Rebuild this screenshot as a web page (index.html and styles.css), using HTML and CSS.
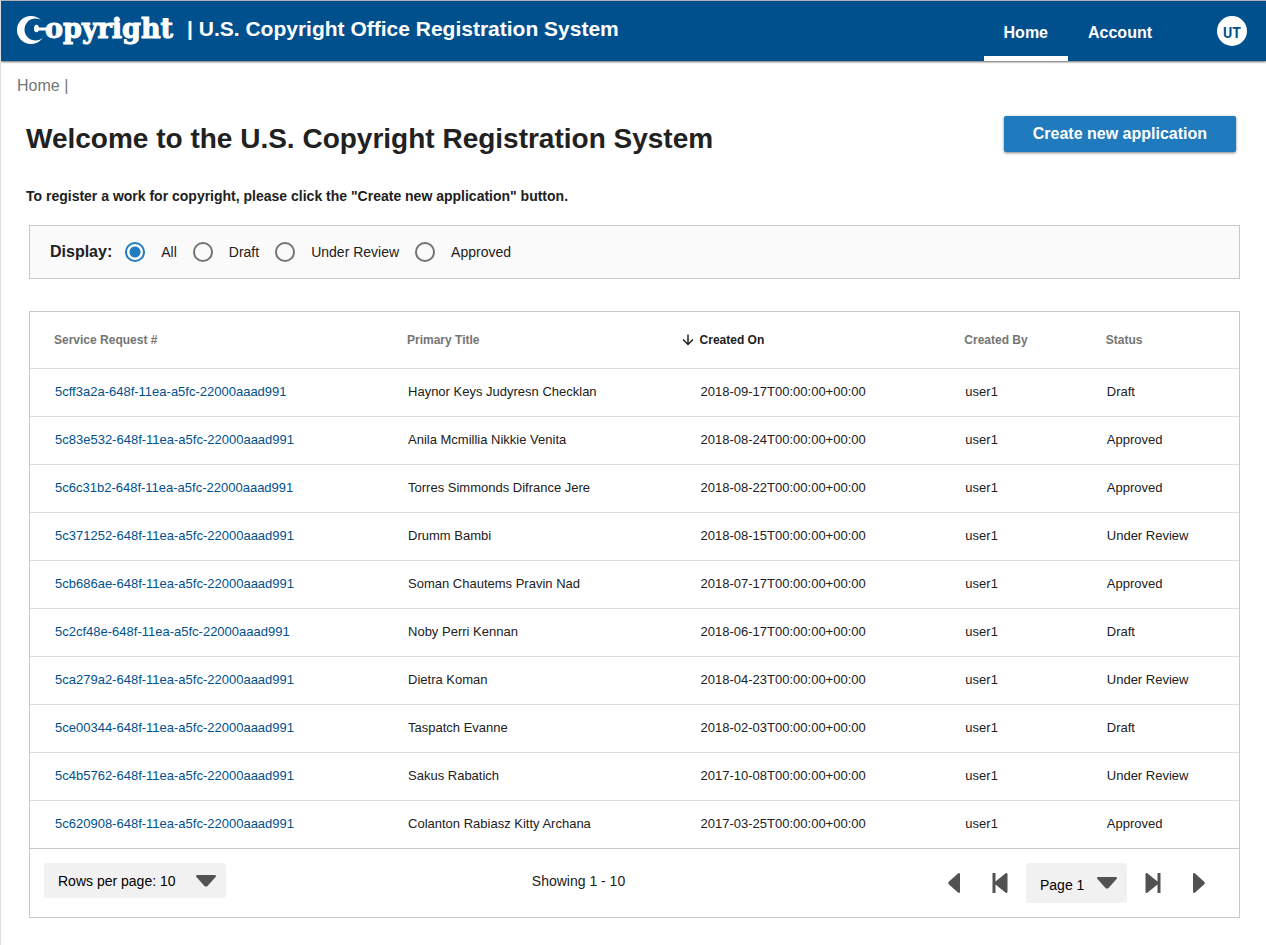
FILE: index.html
```html
<!DOCTYPE html>
<html lang="en">
<head>
<meta charset="utf-8">
<meta name="viewport" content="width=device-width, initial-scale=1">
<title>U.S. Copyright Office Registration System</title>
<link rel="stylesheet" href="styles.css">
</head>
<body>
<header class="topbar">
  <a class="brand" href="#" aria-label="Copyright">
    <svg class="logo" width="160" height="32" viewBox="0 0 160 32" aria-hidden="true">
      <defs>
        <mask id="crescent">
          <rect width="32" height="32" fill="#000"/>
          <circle cx="14" cy="15" r="14" fill="#fff"/>
          <circle cx="18.500" cy="14.500" r="11" fill="#000"/>
          <ellipse cx="19.500" cy="13.500" rx="2.500" ry="3.800" fill="#fff"/>
          <rect x="20" y="12.500" width="10" height="3" fill="#fff"/>
        </mask>
      </defs>
      <rect width="30" height="32" fill="#fff" mask="url(#crescent)"/>
      <text class="logo-text" x="28" y="23">opyright</text>
    </svg>
  </a>
  <span class="system-name">| U.S. Copyright Office Registration System</span>
  <nav class="main-nav">
    <a class="nav-link active" href="#">Home</a>
    <a class="nav-link" href="#">Account</a>
  </nav>
  <button class="avatar" type="button">UT</button>
</header>

<nav class="breadcrumb"><a href="#">Home</a> |</nav>

<main class="content">
  <div class="heading-row">
    <h1>Welcome to the U.S. Copyright Registration System</h1>
    <button class="create" type="button">Create new application</button>
  </div>
  <p class="intro">To register a work for copyright, please click the "Create new application" button.</p>

  <fieldset class="filters">
    <div class="filter-row">
      <span class="filter-title">Display:</span>
      <label><input type="radio" name="display" checked>All</label>
      <label><input type="radio" name="display">Draft</label>
      <label><input type="radio" name="display">Under Review</label>
      <label><input type="radio" name="display">Approved</label>
    </div>
  </fieldset>

  <section class="panel">
    <table class="requests">
      <thead>
        <tr>
          <th class="col-id">Service Request #</th>
          <th class="col-title">Primary Title</th>
          <th class="col-created" aria-sort="descending">
            <button class="sort" type="button">
              <svg width="12" height="12" viewBox="0 0 12 12" fill="none" stroke="currentColor" stroke-width="1.500" aria-hidden="true"><path d="M6 .5v10M1 5.500l5 5 5-5"/></svg>
              Created On
            </button>
          </th>
          <th class="col-by">Created By</th>
          <th class="col-status">Status</th>
        </tr>
      </thead>
      <tbody>
        <tr><td><a href="#">5cff3a2a-648f-11ea-a5fc-22000aaad991</a></td><td>Haynor Keys Judyresn Checklan</td><td>2018-09-17T00:00:00+00:00</td><td>user1</td><td>Draft</td></tr>
        <tr><td><a href="#">5c83e532-648f-11ea-a5fc-22000aaad991</a></td><td>Anila Mcmillia Nikkie Venita</td><td>2018-08-24T00:00:00+00:00</td><td>user1</td><td>Approved</td></tr>
        <tr><td><a href="#">5c6c31b2-648f-11ea-a5fc-22000aaad991</a></td><td>Torres Simmonds Difrance Jere</td><td>2018-08-22T00:00:00+00:00</td><td>user1</td><td>Approved</td></tr>
        <tr><td><a href="#">5c371252-648f-11ea-a5fc-22000aaad991</a></td><td>Drumm Bambi</td><td>2018-08-15T00:00:00+00:00</td><td>user1</td><td>Under Review</td></tr>
        <tr><td><a href="#">5cb686ae-648f-11ea-a5fc-22000aaad991</a></td><td>Soman Chautems Pravin Nad</td><td>2018-07-17T00:00:00+00:00</td><td>user1</td><td>Approved</td></tr>
        <tr><td><a href="#">5c2cf48e-648f-11ea-a5fc-22000aaad991</a></td><td>Noby Perri Kennan</td><td>2018-06-17T00:00:00+00:00</td><td>user1</td><td>Draft</td></tr>
        <tr><td><a href="#">5ca279a2-648f-11ea-a5fc-22000aaad991</a></td><td>Dietra Koman</td><td>2018-04-23T00:00:00+00:00</td><td>user1</td><td>Under Review</td></tr>
        <tr><td><a href="#">5ce00344-648f-11ea-a5fc-22000aaad991</a></td><td>Taspatch Evanne</td><td>2018-02-03T00:00:00+00:00</td><td>user1</td><td>Draft</td></tr>
        <tr><td><a href="#">5c4b5762-648f-11ea-a5fc-22000aaad991</a></td><td>Sakus Rabatich</td><td>2017-10-08T00:00:00+00:00</td><td>user1</td><td>Under Review</td></tr>
        <tr><td><a href="#">5c620908-648f-11ea-a5fc-22000aaad991</a></td><td>Colanton Rabiasz Kitty Archana</td><td>2017-03-25T00:00:00+00:00</td><td>user1</td><td>Approved</td></tr>
      </tbody>
    </table>
    <footer class="pager">
      <div class="picker rows-picker">
        <select aria-label="Rows per page"><option>Rows per page: 10</option></select>
        <svg class="caret" width="20" height="12" viewBox="0 0 20 12" aria-hidden="true"><path d="M1 0h18q1 0 1 1.500L11.500 11q-1.500 1-3 0L0 1.500Q0 0 1 0z"/></svg>
      </div>
      <span class="showing">Showing 1 - 10</span>
      <div class="page-nav">
        <button type="button" aria-label="Previous page"><svg width="12" height="20" viewBox="0 0 12 20"><path d="M12 1v18q0 1-1.500 1L1 11.500q-1.500-1.500 0-3L10.500 0Q12 0 12 1z"/></svg></button>
        <button type="button" aria-label="First page"><svg width="16" height="20" viewBox="0 0 16 20"><path d="M.5 0h3v8.500L14 0q1.500 0 1.500 1v18q0 1-1.500 1L3.500 11.500V20h-3z"/></svg></button>
        <div class="picker page-picker">
          <select aria-label="Page"><option>Page 1</option></select>
          <svg class="caret" width="20" height="12" viewBox="0 0 20 12" aria-hidden="true"><path d="M1 0h18q1 0 1 1.500L11.500 11q-1.500 1-3 0L0 1.500Q0 0 1 0z"/></svg>
        </div>
        <button type="button" aria-label="Last page"><svg width="16" height="20" viewBox="0 0 16 20"><path d="M15.500 0h-3v8.500L2 0Q.5 0 .5 1v18q0 1 1.500 1l10.500-8.500V20h3z"/></svg></button>
        <button type="button" aria-label="Next page"><svg width="12" height="20" viewBox="0 0 12 20"><path d="M0 1v18q0 1 1.500 1L11 11.500q1.500-1.500 0-3L1.500 0Q0 0 0 1z"/></svg></button>
      </div>
    </footer>
  </section>
</main>
</body>
</html>
```
FILE: styles.css
```css
* { box-sizing: border-box; }

body {
  margin: 0;
  min-height: 100vh;
  border-left: 1px solid #dcdfe6;
  border-top: 1px solid #b0b4b8;
  background: #fff;
  color: #212121;
  font-family: "Liberation Sans", Arial, sans-serif;
  font-size: 14px;
}

a { color: inherit; text-decoration: none; }
button, select { font-family: inherit; cursor: pointer; }

.topbar {
  display: flex;
  align-items: stretch;
  height: 60px;
  padding: 0 19px 0 16px;
  background: #01508e;
  color: #fff;
  box-shadow: 0 1px 2px rgba(0, 0, 0, 0.6);
}

.brand { padding-top: 14px; }
.logo { display: block; overflow: visible; }
.logo-text {
  fill: #fff;
  stroke: #fff;
  stroke-width: 1px;
  font-family: "DejaVu Serif", serif;
  font-size: 27px;
  font-weight: 700;
}

.system-name {
  padding: 16px 0 0 10px;
  font-size: 21px;
  line-height: 24px;
  font-weight: 700;
}

.main-nav { display: flex; margin-left: auto; }
.nav-link {
  padding: 20px 20px 0;
  border-bottom: 5px solid transparent;
  font-size: 16px;
  line-height: 24px;
  font-weight: 700;
}
.nav-link.active { border-bottom-color: #fff; }

.avatar {
  width: 30px;
  height: 30px;
  margin: 15px 0 0 45px;
  padding: 4px 0 0;
  border: 0;
  border-radius: 50%;
  background: #fff;
  color: #01508e;
  font-family: Roboto, sans-serif;
  font-size: 14px;
  font-weight: 700;
}

.breadcrumb {
  padding: 15px 16px 0;
  color: #757575;
  font-size: 16px;
  line-height: 20px;
}

.content { padding: 0 26px 27px 28px; }

.heading-row {
  display: flex;
  justify-content: space-between;
  align-items: flex-start;
  margin: 20px 4px 0 -3px;
}
h1 {
  margin: 5px 0 0;
  font-size: 28px;
  line-height: 36px;
}
.create {
  height: 36px;
  padding: 0 29px;
  border: 0;
  border-radius: 2px;
  background: #207bbe;
  color: #fff;
  font-size: 16px;
  font-weight: 700;
  box-shadow: 0 1px 3px rgba(0, 0, 0, 0.5);
}

.intro {
  margin: 29px 0 0 -3px;
  font-size: 14px;
  line-height: 20px;
  font-weight: 700;
}

.filters {
  margin: 19px 0 0;
  padding: 0 20px;
  border: 1px solid #c8c8c8;
  background: #fafafa;
}
.filter-row {
  display: flex;
  align-items: center;
  gap: 16px;
  height: 52px;
}
.filter-title { margin-right: -3px; font-size: 16px; font-weight: 700; }
.filter-row label { display: flex; align-items: center; gap: 16px; }
.filter-row input {
  appearance: none;
  width: 20px;
  height: 20px;
  margin: 0;
  border: 2px solid #737373;
  border-radius: 50%;
}
.filter-row input:checked {
  border-color: #207bbe;
  background: radial-gradient(circle, #207bbe 5px, transparent 6px);
}

.panel { margin-top: 32px; border: 1px solid #c8c8c8; }

.requests {
  width: 100%;
  table-layout: fixed;
  border-collapse: separate;
  border-spacing: 0;
}
.requests th {
  height: 57px;
  padding: 0 24px;
  border-bottom: 1px solid #dedede;
  color: #757575;
  font-size: 12px;
  text-align: left;
}
.requests td {
  height: 48px;
  padding: 0 10px 2px 25px;
  border-bottom: 1px solid #dedede;
  font-size: 13px;
}
.requests tbody tr:last-child td { border-bottom-color: #c8c8c8; }
.requests td a { color: #01508e; }
.col-id { width: 29.2%; }
.col-title { width: 24.2%; }
.col-created { width: 21.9%; }
.col-by { width: 11.7%; }
.requests .col-created { padding-left: 6px; }

.sort {
  display: flex;
  align-items: center;
  gap: 6px;
  padding: 0;
  border: 0;
  background: none;
  color: #212121;
  font-size: 12px;
  font-weight: 700;
}

.pager {
  display: flex;
  justify-content: space-between;
  align-items: flex-start;
  padding: 14px 17px 14px 14px;
}
.picker { position: relative; }
.picker select {
  appearance: none;
  width: 100%;
  height: 100%;
  padding: 0 14px;
  border: 0;
  border-radius: 3px;
  background: #f1f1f1;
  color: #000;
  font-size: 14px;
}
.rows-picker { width: 182px; height: 35px; }
.page-picker { width: 101px; height: 40px; margin: 0 3px; }
.page-picker select { padding-top: 4px; }
.caret {
  position: absolute;
  top: 12px;
  right: 10px;
  pointer-events: none;
}
.page-picker .caret { top: 14px; }
.pager svg { fill: #525252; }
.showing { line-height: 36px; }
.page-nav { display: flex; }
.page-nav button {
  display: flex;
  align-items: center;
  justify-content: center;
  width: 46px;
  height: 40px;
  padding: 0;
  border: 0;
  background: none;
}
```
